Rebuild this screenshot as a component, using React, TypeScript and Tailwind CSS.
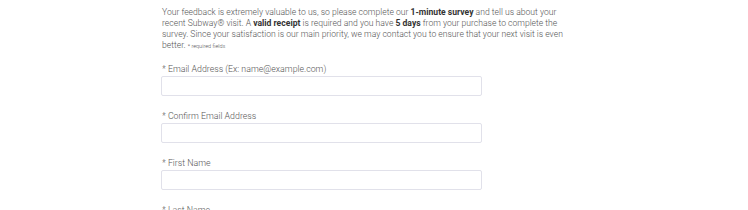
const fields = [
  "* Email Address (Ex: name@example.com)",
  "* Confirm Email Address",
  "* First Name",
  "* Last Name",
];

export default function App() {
  return (
    <div className="h-[210px] w-[748px] overflow-hidden bg-white font-['Roboto',sans-serif] text-[#555]">
      <div className="ml-[162px] w-[410px] pt-[7px]">
        <p className="text-[8.6px] leading-[11px] font-light">
          Your feedback is extremely valuable to us, so please complete our{" "}
          <b className="font-bold text-[#333]">1-minute survey</b> and tell us about your
          recent Subway® visit. A <b className="font-bold text-[#333]">valid receipt</b> is
          required and you have <b className="font-bold text-[#333]">5 days</b> from your
          purchase to complete the survey. Since your satisfaction is our main priority, we
          may contact you to ensure that your next visit is even better.{" "}
          <span className="text-[5.5px]">* required fields</span>
        </p>
        <div className="mt-[11px] flex flex-col">
          {fields.map((label) => (
            <div key={label} className="flex h-[47px] flex-col">
              <label className="pt-px text-[8.8px] leading-[11px] font-light">{label}</label>
              <input
                type="text"
                className="-ml-px mt-px h-[20px] w-[321px] rounded-[2px] border border-[#e1e1ea] bg-white"
              />
            </div>
          ))}
        </div>
      </div>
    </div>
  );
}
